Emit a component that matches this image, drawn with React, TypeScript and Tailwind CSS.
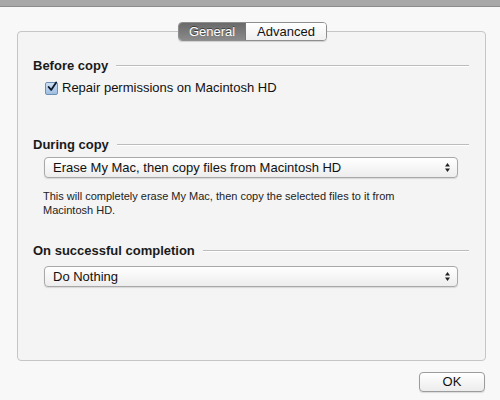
import React from "react";

const font = { fontFamily: '"Liberation Sans", Arial, sans-serif' };

function Heading({ children }: { children: React.ReactNode }) {
  return (
    <div className="flex items-center h-4 pr-[16px] pl-[15px]">
      <span className="text-[13px] font-bold text-[#1a1a1a] leading-4 whitespace-nowrap">{children}</span>
      <div className="flex-1 ml-[8px] h-[2px] border-t border-[#bcbcbc] border-b border-b-white" />
    </div>
  );
}

function Arrows() {
  return (
    <svg width="7" height="11" viewBox="0 0 7 11">
      <path d="M3.5 1 L6 4.5 L1 4.5 Z" fill="#222" />
      <path d="M3.5 10 L6 6.5 L1 6.5 Z" fill="#222" />
    </svg>
  );
}

function Popup({ label }: { label: string }) {
  return (
    <div className="ml-[26px] mr-[27px] h-[21px] rounded-[4px] border border-[#a8a8a8] bg-gradient-to-b from-white to-[#ededed] shadow-[0_1px_1px_rgba(0,0,0,0.12)] flex items-center pl-[8px] pr-[6px]">
      <span className="flex-1 text-[13px] text-[#111] leading-4">{label}</span>
      <Arrows />
    </div>
  );
}

export default function App() {
  return (
    <div className="w-[500px] h-[400px] bg-[#f8f8f8] overflow-hidden flex flex-col" style={font}>
      <div className="h-[7px] bg-[#a8a8a8] border-b border-[#8c8c8c]" />
      <div className="flex justify-center mt-[15px] relative z-10 -mb-[10px] pl-[5px]">
        <div className="flex h-[19px] rounded-[4px] border border-[#8e8e8e] overflow-hidden shadow-[0_1px_1px_rgba(0,0,0,0.15)]">
          <div className="w-[67px] flex items-center justify-center bg-gradient-to-b from-[#6a6a6a] to-[#8a8a8a] text-white text-[13px] border-r border-[#777] [text-shadow:0_-1px_0_rgba(0,0,0,0.5)]">
            General
          </div>
          <div className="w-[80px] flex items-center justify-center bg-gradient-to-b from-white to-[#f0f0f0] text-[#111] text-[13px]">
            Advanced
          </div>
        </div>
      </div>
      <div className="ml-[17px] w-[469px] h-[330px] rounded-[4px] border border-[#c6c6c6] bg-[#f4f4f4] pt-[26px] flex flex-col">
        <Heading>Before copy</Heading>
        <div className="mt-[6px] ml-[27px] flex items-center h-4">
          <div className="w-[13px] h-[13px] rounded-[2px] border border-[#6f8fb5] bg-gradient-to-b from-[#cfe0f3] to-[#9ebde0] flex items-center justify-center">
            <svg width="12" height="12" viewBox="0 0 12 12" className="-mt-[2px] ml-[1px]">
              <path d="M2 6 L5 9.5 L11 0.5" stroke="#0c1a2e" strokeWidth="2.2" fill="none" strokeLinecap="round" strokeLinejoin="round" />
            </svg>
          </div>
          <span className="ml-[4px] text-[13px] text-[#111] leading-4">Repair permissions on Macintosh HD</span>
        </div>
        <div className="mt-[41px]">
          <Heading>During copy</Heading>
        </div>
        <div className="mt-[4px]">
          <Popup label="Erase My Mac, then copy files from Macintosh HD" />
        </div>
        <div className="mt-[11px] ml-[25px] text-[11px] leading-[14px] text-[#222] w-[375px]">
          This will completely erase My Mac, then copy the selected files to it from Macintosh HD.
        </div>
        <div className="mt-[26px]">
          <Heading>On successful completion</Heading>
        </div>
        <div className="mt-[7px]">
          <Popup label="Do Nothing" />
        </div>
      </div>
      <div className="flex justify-end pr-[15px] mt-[11px]">
        <div className="w-[66px] h-[20px] rounded-[4px] border border-[#9c9c9c] bg-gradient-to-b from-white to-[#ececec] shadow-[0_1px_1px_rgba(0,0,0,0.12)] flex items-center justify-center text-[13px] text-[#111]">
          OK
        </div>
      </div>
    </div>
  );
}
